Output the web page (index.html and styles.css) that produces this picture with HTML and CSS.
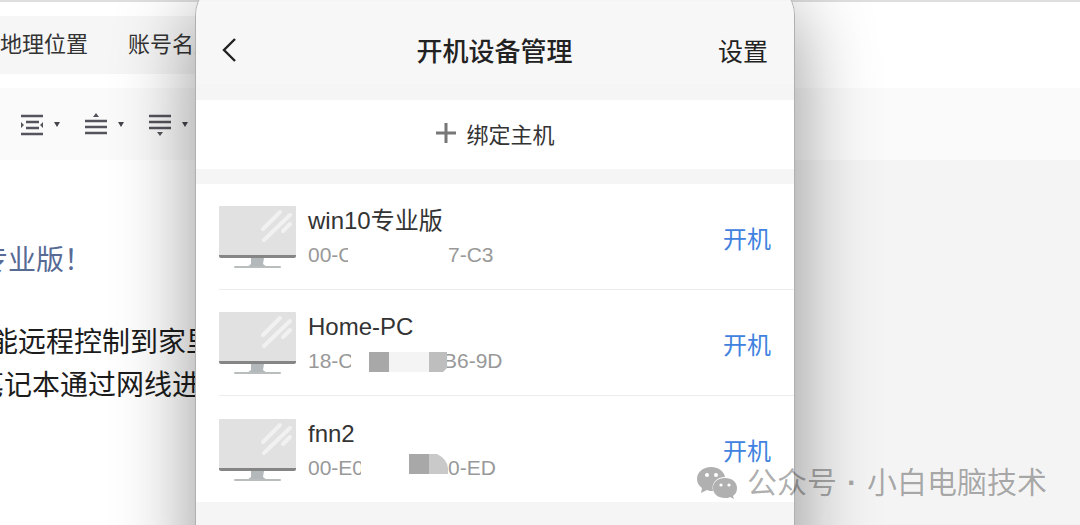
FILE: index.html
```
<!DOCTYPE html>
<html lang="zh-CN">
<head>
<meta charset="UTF-8">
<title>开机设备管理</title>
<link rel="stylesheet" href="styles.css">
</head>
<body>
<svg class="defs" aria-hidden="true">
    <symbol id="monitor" viewBox="0 0 77 62">
        <path d="M32 52h13l-1 6 4 3H28l4-3z" fill="#b3b9ba"/>
        <rect x="15" y="60" width="47" height="2" rx="1" fill="#b9bdbd"/>
        <rect width="77" height="51" rx="1" fill="#e1e1e1"/>
        <path d="M0 49h77v1q0 2-2 2H2q-2 0-2-2z" fill="#858585"/>
        <path d="M44 23 61 6M45 34 71 9M64 25l7-7" stroke="#f1f1f1" stroke-width="4" stroke-linecap="round"/>
    </symbol>
    <symbol id="caret" viewBox="0 0 6 5">
        <path d="M0 0h6L3 5z" fill="#45444c"/>
    </symbol>
</svg>

<div id="editor">
    <nav class="tabs">
        <a href="#location">地理位置</a>
        <a href="#account">账号名片</a>
    </nav>
    <div class="toolbar">
        <button class="tool" aria-label="两端缩进">
            <svg width="24" height="24" viewBox="0 0 24 24"><path d="M1 4h22M6 10h13M6 16h13M1 22h22" stroke="#55545c" stroke-width="2.4"/><path d="M1 10v6l3-3zM23 10v6l-3-3z" fill="#55545c"/></svg>
            <svg class="caret"><use href="#caret"/></svg>
        </button>
        <button class="tool" aria-label="段前距">
            <svg width="24" height="24" viewBox="0 0 24 24"><path d="M1 9h22M1 15h22M1 21h22" stroke="#55545c" stroke-width="2.4"/><path d="M9 5h6l-3-4z" fill="#55545c"/></svg>
            <svg class="caret"><use href="#caret"/></svg>
        </button>
        <button class="tool" aria-label="段后距">
            <svg width="24" height="24" viewBox="0 0 24 24"><path d="M1 4h22M1 10h22M1 16h22" stroke="#55545c" stroke-width="2.4"/><path d="M9 20h6l-3 4z" fill="#55545c"/></svg>
            <svg class="caret"><use href="#caret"/></svg>
        </button>
    </div>
    <div class="workspace">
        <article class="document">
            <h2>专业版！</h2>
            <p>能远程控制到家里</p>
            <p class="wrapped">笔记本通过网线进</p>
        </article>
    </div>
</div>

<main id="phone">
    <header class="title-bar">
        <button class="back" aria-label="返回"><svg width="16" height="26" viewBox="0 0 16 26"><path d="M14 2 3 13l11 11" fill="none" stroke="#222" stroke-width="2.4"/></svg></button>
        <h1>开机设备管理</h1>
        <button class="settings">设置</button>
    </header>
    <button class="bind">
        <svg width="22" height="22" viewBox="0 0 22 22"><path d="M11 1v20M1 11h20" stroke="#777" stroke-width="3"/></svg>
        绑定主机
    </button>
    <ul class="devices">
        <li>
            <svg class="monitor"><use href="#monitor"/></svg>
            <div class="info">
                <h3>win10专业版</h3>
                <div class="mac"><span class="head head-s">00-C</span><svg width="100" height="22"></svg><span>7-C3</span></div>
            </div>
            <button class="power">开机</button>
        </li>
        <li>
            <svg class="monitor"><use href="#monitor"/></svg>
            <div class="info">
                <h3>Home-PC</h3>
                <div class="mac"><span class="head head-m">18-C</span><svg class="mask" width="92" height="22"><path d="M18 2h20v20H18z" fill="#a8a8a8"/><path d="M38 2h40v20H38z" fill="#f4f4f4"/><path d="M78 2h18v16l-4 4H78z" fill="#bebebe"/></svg><span>B6-9D</span></div>
            </div>
            <button class="power">开机</button>
        </li>
        <li>
            <svg class="monitor"><use href="#monitor"/></svg>
            <div class="info">
                <h3>fnn2</h3>
                <div class="mac"><span class="head head-l">00-E0</span><svg class="mask" width="87" height="22"><path d="M48-3h20v20H48z" fill="#a8a8a8"/><path d="M68-3h8q10 5 11 14v6H68z" fill="#c9c9c9"/></svg><span>0-ED</span></div>
            </div>
            <button class="power">开机</button>
        </li>
    </ul>
</main>

<div id="watermark">
    <svg width="40" height="34" viewBox="0 0 40 34">
        <path fill="#b0b0b0" d="M14 1C6 1 0 6 0 13c0 4 2 7 5 9l-1 5 6-3c2 1 4 1 6 1-2-8 4-14 12-14C27 5 21 1 14 1z"/>
        <path fill="#b0b0b0" d="M28 12c-7 0-12 4-12 10s5 10 12 10c2 0 4 0 5-1l4 2-1-3c3-2 4-5 4-8 0-6-5-10-12-10z"/>
        <g fill="#fff"><circle cx="10" cy="9" r="2"/><circle cx="19" cy="9" r="2"/><circle cx="24" cy="19" r="1.6"/><circle cx="32" cy="19" r="1.6"/></g>
    </svg>
    <span>公众号</span><b>·</b><span>小白电脑技术</span>
</div>
</body>
</html>
```
FILE: styles.css
```
* {
    box-sizing: border-box;
}

html {
    overflow: hidden;
}

body {
    margin: 0;
    height: 100vh;
    overflow: hidden;
    position: relative;
    font-family: "Liberation Sans", "Noto Sans CJK SC", sans-serif;
    color: #333;
}

h1, h2, h3, p, ul {
    margin: 0;
    padding: 0;
    font-weight: normal;
}

button {
    border: 0;
    padding: 0;
    background: none;
    font-family: inherit;
    color: inherit;
}

svg {
    display: block;
    overflow: visible;
    flex: none;
}

.defs {
    position: absolute;
    width: 0;
    height: 0;
}

/* article editor behind the phone */

#editor {
    display: flex;
    flex-direction: column;
    height: 100%;
    border-top: 2px solid #dedede;
}

.tabs {
    display: flex;
    align-items: center;
    gap: 40px;
    width: 50%;
    height: 58px;
    margin: 14px 0;
    padding-bottom: 6px;
    background: #f6f6f6;
    font-size: 22px;
}

.tabs a {
    color: #333;
    text-decoration: none;
    white-space: nowrap;
}

.toolbar {
    display: flex;
    align-items: center;
    gap: 24px;
    height: 72px;
    padding-left: 20px;
    background: #fafafa;
}

.tool {
    display: flex;
    align-items: center;
    gap: 10px;
}

.caret {
    width: 6px;
    height: 5px;
}

.workspace {
    flex: 1;
    background: #f4f4f4;
}

.document {
    width: 50%;
    height: 100%;
    padding-top: 79px;
    overflow: hidden;
    background: #fff;
    color: #1c1c1c;
    font-size: 28px;
    line-height: 43px;
    white-space: nowrap;
}

.document h2 {
    margin: 0 0 39px -20px;
    color: #576b95;
    font-size: 28px;
}

.document p {
    margin-left: -10px;
}

.document .wrapped {
    margin-left: -24px;
}

/* phone */

#phone {
    position: absolute;
    top: -24px;
    bottom: -60px;
    left: 195px;
    right: 285px;
    padding-top: 24px;
    overflow: hidden;
    background: #f5f5f5;
    border: 1px solid #b0b0b0;
    border-radius: 40px;
    box-shadow: 0 30px 80px rgba(0, 0, 0, 0.42);
}

.title-bar {
    display: grid;
    grid-template-columns: 1fr auto 1fr;
    align-items: center;
    height: 83px;
    padding: 14px 26px 0 25px;
    margin-bottom: 16px;
    background: #f7f7f7;
    color: #222;
}

.title-bar h1 {
    font-size: 26px;
    font-weight: 500;
}

.back {
    justify-self: start;
}

.settings {
    justify-self: end;
    font-size: 25px;
}

.bind {
    display: flex;
    align-items: center;
    justify-content: center;
    gap: 9px;
    width: 100%;
    height: 69px;
    margin-bottom: 15px;
    padding-bottom: 4px;
    background: #fff;
    font-size: 22px;
}

.devices {
    list-style: none;
    padding-left: 23px;
    background: #fff;
}

.devices li {
    display: flex;
    align-items: center;
    height: 106px;
    padding: 1px 23px 0 0;
    border-bottom: 1px solid #ececec;
}

.devices li:last-child {
    border-bottom: 0;
}

.monitor {
    width: 77px;
    height: 62px;
}

.info {
    flex: 1;
    padding-left: 12px;
}

.info h3 {
    font-size: 24px;
    line-height: 36px;
}

.mac {
    display: flex;
    align-items: center;
    color: #999;
    font-size: 21px;
    line-height: 32px;
}

.head {
    overflow: hidden;
    white-space: nowrap;
}

.head-s {
    width: 40px;
}

.head-m {
    width: 43px;
}

.head-l {
    width: 53px;
}

.mask {
    position: relative;
}

.power {
    color: #4182e0;
    font-size: 24px;
}

/* account mark over everything */

#watermark {
    position: absolute;
    right: 33px;
    bottom: 20px;
    display: flex;
    align-items: center;
    gap: 10px;
    color: rgba(0, 0, 0, 0.32);
    font-size: 30px;
    line-height: 44px;
}
```
